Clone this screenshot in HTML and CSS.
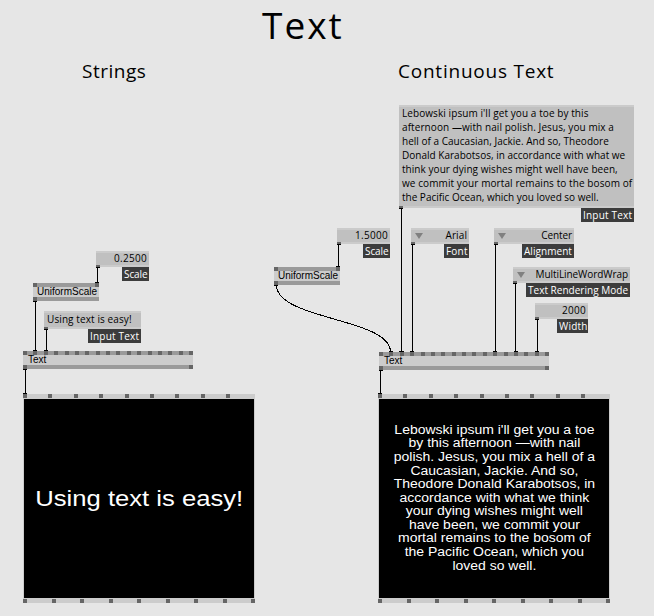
FILE: index.html
```html
<!DOCTYPE html>
<html lang="en">
<head>
    <meta charset="UTF-8">
    <title>Text</title>
    <link rel="stylesheet" href="styles.css">
</head>
<body>
    <main class="patch">
        <h1 class="comment title">Text</h1>
        <h2 class="comment strings">Strings</h2>
        <h2 class="comment continuous">Continuous Text</h2>

        <!-- Strings -->
        <div class="iobox scale-a"><div class="value num">0.2500</div><span class="label">Scale</span></div>
        <div class="node uniform-a">
            <div class="pins"><i></i><i></i></div><div class="name">UniformScale</div><div class="pins"><i></i></div>
        </div>
        <div class="iobox input-a"><div class="value">Using text is easy!</div><span class="label wide">Input Text</span></div>
        <div class="node text-a">
            <div class="pins"><i></i><i></i><i></i><i></i><i></i><i></i><i></i><i></i><i></i><i></i><i></i><i></i><i></i><i></i><i></i><i></i><i></i></div>
            <div class="name">Text</div>
            <div class="pins"><i></i><i></i></div>
        </div>
        <div class="renderer renderer-a">
            <div class="pins inputs"><i></i><i></i><i></i><i></i><i></i><i></i><i></i><i></i><i></i></div>
            <div class="screen"><p class="big">Using text is easy!</p></div>
            <div class="pins outputs"><i></i><i></i><i></i><i></i><i></i><i></i><i></i><i></i><i></i></div>
        </div>

        <!-- Continuous Text -->
        <div class="iobox input-b">
            <div class="value">
                <p class="l1">Lebowski ipsum i'll get you a toe by this</p>
                <p class="l2">afternoon —with nail polish. Jesus, you mix a</p>
                <p class="l3">hell of a Caucasian, Jackie. And so, Theodore</p>
                <p class="l4">Donald Karabotsos, in accordance with what we</p>
                <p class="l5">think your dying wishes might well have been,</p>
                <p class="l6">we commit your mortal remains to the bosom of</p>
                <p class="l7">the Pacific Ocean, which you loved so well.</p>
            </div>
            <span class="label wide">Input Text</span>
        </div>
        <div class="iobox scale-b"><div class="value num">1.5000</div><span class="label">Scale</span></div>
        <div class="node uniform-b">
            <div class="pins"><i></i><i></i></div><div class="name">UniformScale</div><div class="pins"><i></i></div>
        </div>
        <div class="iobox font"><div class="value enum">Arial</div><span class="label">Font</span></div>
        <div class="iobox alignment"><div class="value enum">Center</div><span class="label">Alignment</span></div>
        <div class="iobox mode"><div class="value enum">MultiLineWordWrap</div><span class="label">Text Rendering Mode</span></div>
        <div class="iobox width"><div class="value num">2000</div><span class="label">Width</span></div>
        <div class="node text-b">
            <div class="pins"><i></i><i></i><i></i><i></i><i></i><i></i><i></i><i></i><i></i><i></i><i></i><i></i><i></i><i></i><i></i><i></i><i></i></div>
            <div class="name">Text</div>
            <div class="pins"><i></i><i></i></div>
        </div>
        <div class="renderer renderer-b">
            <div class="pins inputs"><i></i><i></i><i></i><i></i><i></i><i></i><i></i><i></i><i></i></div>
            <div class="screen">
                <p class="wrapped">Lebowski ipsum i'll get you a toe<br>by this afternoon —with nail<br>polish. Jesus, you mix a hell of a<br>Caucasian, Jackie. And so,<br>Theodore Donald Karabotsos, in<br>accordance with what we think<br>your dying wishes might well<br>have been, we commit your<br>mortal remains to the bosom of<br>the Pacific Ocean, which you<br>loved so well.</p>
            </div>
            <div class="pins outputs"><i></i><i></i><i></i><i></i><i></i><i></i><i></i><i></i><i></i></div>
        </div>

        <!-- links between pins -->
        <svg class="links" width="654" height="616" shape-rendering="crispEdges">
            <path d="M96 267.5h4M97.5 267v16M95 282.5h4"/>
            <path d="M33 301.5h4M35.5 301v50M33 350.5h4"/>
            <path d="M44 329.5h4M46.5 329v22M44 350.5h4"/>
            <path d="M23 369.5h4M25.5 369v25M23 393.5h4"/>
            <path d="M399 208.5h4M401.5 208v144M399 351.5h5"/>
            <path d="M337 244.5h4M338.5 244v23M336 266.5h4"/>
            <path d="M411 244.5h4M412.5 244v108M410 351.5h4"/>
            <path d="M494 244.5h4M495.5 244v108M493 351.5h4"/>
            <path d="M513 283.5h4M515.5 283v69M514 351.5h4"/>
            <path d="M535 319.5h4M537.5 319v33M535 351.5h4"/>
            <path d="M379 370.5h4M380.5 370v24M378 393.5h4"/>
            <path d="M274 285.5h4M276.5 285C276.5 320 390.5 318 390.5 352M389 351.5h4"/>
        </svg>
    </main>
</body>
</html>
```

FILE: styles.css
```css
* {
    margin: 0;
    padding: 0;
    box-sizing: border-box;
}

body {
    background: #e6e6e6;
    color: #000;
    font-family: "Open Sans", "Noto Sans", sans-serif;
    font-size: 10px;
}

p, span, .value, .name, .comment {
    white-space: nowrap;
}

.patch {
    position: relative;
    width: 654px;
    height: 616px;
}

.comment, .iobox, .node, .renderer, .links {
    position: absolute;
}

.comment {
    font-weight: 400;
}

.title {
    left: 262px;
    top: 0;
    font-size: 37px;
    line-height: 50px;
    letter-spacing: 2px;
}

.strings, .continuous {
    top: 58px;
    font-size: 19px;
    line-height: 26px;
    letter-spacing: 0.5px;
}

.strings { left: 82px; }

.continuous {
    left: 398px;
    letter-spacing: 0.77px;
}

/* IO boxes */
.iobox {
    display: flex;
    flex-direction: column;
    align-items: flex-end;
    line-height: 14px;
}

.value {
    position: relative;
    width: 100%;
    height: 16px;
    background: #c0c0c0;
    border-top: 2px solid #cbcbcb;
    border-bottom: 2px solid #cbcbcb;
    padding: 0 3px;
    line-height: 10px;
    letter-spacing: 0.1px;
}

/* output pin */
.value::after {
    content: "";
    position: absolute;
    left: 0;
    bottom: -2px;
    width: 4px;
    height: 2px;
    background: #666;
}

.num, .enum {
    padding-right: 2px;
    text-align: right;
}

.num {
    letter-spacing: 0.3px;
}

.enum::before {
    content: "";
    position: absolute;
    left: 4px;
    top: 3px;
    border: 4px solid transparent;
    border-top: 6px solid #808080;
    border-bottom: 0;
}

.label {
    height: 14px;
    padding: 0 2px;
    background: #3c3c3c;
    color: #fff;
    letter-spacing: 0.2px;
}

.scale-a { left: 96px; top: 251px; width: 53px; }
.scale-b { left: 337px; top: 228px; width: 53px; }
.input-a { left: 44px; top: 311px; width: 97px; }
.input-b { left: 399px; top: 105px; width: 235px; }
.font { left: 411px; top: 228px; width: 58px; }
.alignment { left: 494px; top: 228px; width: 80px; }
.mode { left: 513px; top: 267px; width: 117px; }
.width { left: 535px; top: 303px; width: 53px; }

.scale-a .label, .scale-b .label { width: 27px; letter-spacing: -0.1px; }
.label.wide { width: 53px; }
.font .label { width: 25px; }
.alignment .label { width: 52px; letter-spacing: 0.05px; }
.mode .label { width: 104px; letter-spacing: 0.02px; }
.width .label { width: 31px; }

.alignment .value { letter-spacing: -0.1px; }
.mode .value { letter-spacing: -0.07px; }

.input-a .value {
    height: 18px;
    line-height: 12px;
}

.input-b .value {
    height: 103px;
    line-height: 14px;
}

.l1 { margin-top: -1px; letter-spacing: 0.08px; }
.l2 { letter-spacing: 0.08px; }
.l3 { letter-spacing: 0.02px; }
.l4 { letter-spacing: 0.01px; }
.l5 { letter-spacing: 0.05px; }
.l6 { letter-spacing: 0.09px; }
.l7 { letter-spacing: -0.01px; }

/* nodes */
.node {
    height: 18px;
    background: #ccc;
    font: 10px/10px "Liberation Sans", Arial, sans-serif;
}

.name {
    height: 10px;
    padding-left: 4px;
}

.text-a .name, .text-b .name {
    padding-left: 5px;
}

.pins {
    display: flex;
    justify-content: space-between;
    height: 4px;
    background: #9a9a9a;
}

.pins i {
    width: 4px;
    height: 4px;
    background: #666;
}

.uniform-a { left: 33px; top: 283px; width: 66px; }
.uniform-b { left: 274px; top: 267px; width: 66px; }
.text-a { left: 23px; top: 351px; width: 170px; }
.text-b { left: 379px; top: 352px; width: 170px; }

/* renderers */
.renderer {
    top: 394px;
    width: 232px;
    height: 209px;
    background: #ccc;
}

.renderer-a { left: 23px; }
.renderer-b { left: 378px; }

.renderer .pins {
    background: none;
}

.renderer .inputs {
    width: 207px;
}

.screen {
    display: flex;
    align-items: center;
    justify-content: center;
    width: 230px;
    height: 199px;
    margin: 1px;
    background: #000;
    color: #fff;
    font-family: "Liberation Sans", Arial, sans-serif;
    text-align: center;
}

.screen p {
    transform: scaleX(1.165);
}

.big {
    font-size: 22px;
}

.wrapped {
    font-size: 12px;
    line-height: 13.6px;
}

.links {
    left: 0;
    top: 0;
    fill: none;
    stroke: #000;
}
```
